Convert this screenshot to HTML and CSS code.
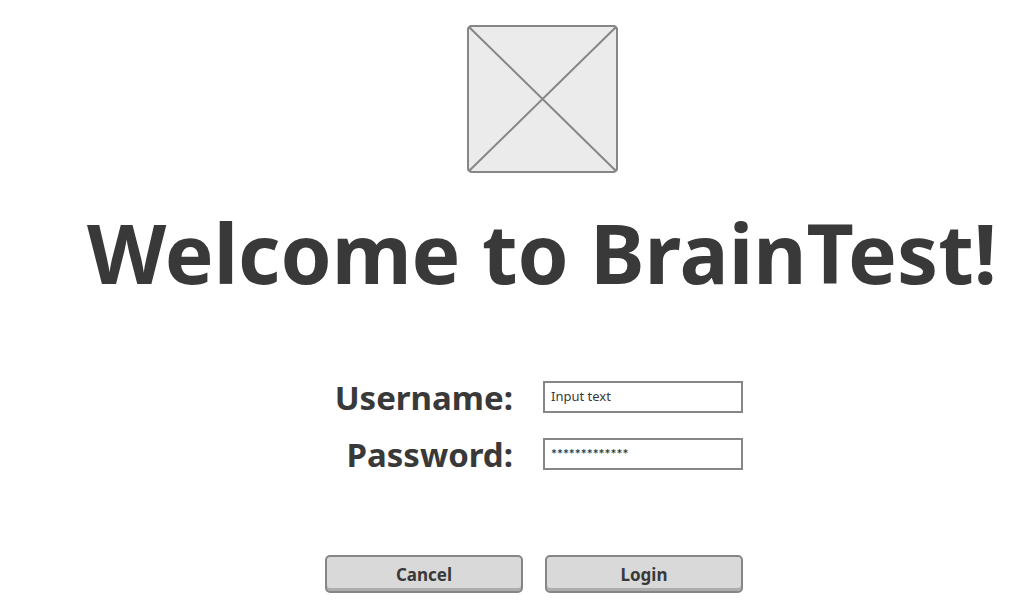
FILE: index.html
```
<!DOCTYPE html>
<html lang="en">
<head>
<meta charset="utf-8">
<title>BrainTest</title>
<link rel="stylesheet" href="styles.css">
</head>
<body>
<main class="page">
  <svg class="logo" viewBox="0 0 151 148" role="img" aria-label="Logo">
    <rect x="1" y="1" width="149" height="146" rx="4" fill="#ebebeb"/>
    <path d="M2 2L149 146M149 2L2 146"/>
    <rect x="1" y="1" width="149" height="146" rx="4" fill="none"/>
  </svg>
  <h1 class="title">Welcome to BrainTest!</h1>
  <form class="login">
    <div class="fields">
      <label class="label" for="username">Username:</label>
      <input class="input" id="username" type="text" value="Input text">
      <label class="label" for="password">Password:</label>
      <input class="input input-masked" id="password" type="text" value="*************">
    </div>
    <div class="actions">
      <button class="button" type="button">Cancel</button>
      <button class="button" type="submit">Login</button>
    </div>
  </form>
</main>
</body>
</html>
```
FILE: styles.css
```
* { box-sizing: border-box; }
body {
  margin: 0;
  background: #fff;
  color: #393939;
  font-family: "Noto Sans", sans-serif;
}
.page {
  display: flex;
  flex-direction: column;
  align-items: center;
  padding: 25px 0 20px 62px;
}
.logo {
  width: 151px;
  height: 148px;
  stroke: #868686;
  stroke-width: 2;
}
.title {
  margin: 23px 0 0;
  font-size: 82px;
  line-height: 112px;
  font-weight: 700;
  white-space: nowrap;
}
.login {
  display: flex;
  flex-direction: column;
  align-items: flex-end;
  margin-right: 16px;
}
.fields {
  display: grid;
  grid-template-columns: 188px 200px;
  column-gap: 30px;
  row-gap: 25px;
  margin-top: 73px;
}
.label {
  font-size: 33px;
  line-height: 34px;
  height: 32px;
  font-weight: 700;
  text-align: right;
}
.input {
  height: 32px;
  padding: 0 6px 2px;
  border: 2px solid #868686;
  background: #fff;
  color: #393939;
  font: 13px "Noto Sans", sans-serif;
}
.input-masked {
  font: 700 14px Lato, sans-serif;
}
.actions {
  display: flex;
  gap: 22px;
  margin-top: 85px;
}
.button {
  width: 198px;
  height: 38px;
  border: 2px solid #868686;
  border-radius: 5px;
  background: #d9d9d9;
  box-shadow: inset 0 -3px #adadad;
  color: #393939;
  font: 700 17px "Noto Sans", sans-serif;
}
```
